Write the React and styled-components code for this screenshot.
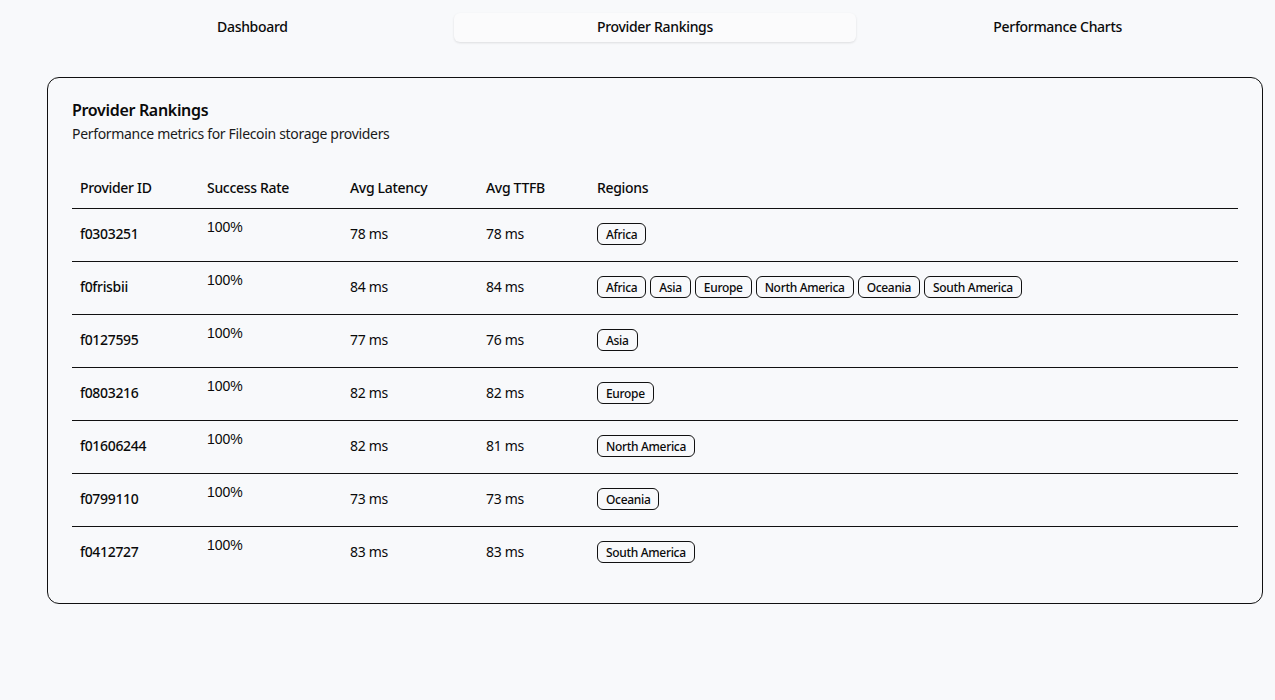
import React from "react";
import styled, { createGlobalStyle } from "styled-components";

const GlobalStyle = createGlobalStyle`
  html, body {
    margin: 0;
    padding: 0;
    background: #f8f9fb;
  }
  body {
    font-family: "Noto Sans", "Open Sans", sans-serif;
    letter-spacing: -0.02em;
    color: #0a0a0a;
  }
`;

const Page = styled.div`
  padding: 9px 12px 40px 47px;
  display: flex;
  flex-direction: column;
  gap: 31px;
  width: 1216px;
`;

const TabList = styled.div`
  display: grid;
  grid-template-columns: repeat(3, 1fr);
  padding: 4px;
  height: 29px;
  border-radius: 8px;
`;

const Tab = styled.button`
  border: none;
  font-family: inherit;
  letter-spacing: inherit;
  font-size: 14px;
  font-weight: 500;
  line-height: 18px;
  padding: 0 0 2px;
  color: #0a0a0a;
  border-radius: 6px;
  background: ${(p) => (p.$active ? "#fbfbfc" : "transparent")};
  box-shadow: ${(p) =>
    p.$active ? "0 1px 3px rgba(0, 0, 0, 0.08), 0 1px 2px rgba(0, 0, 0, 0.04)" : "none"};
  cursor: pointer;
`;

const Card = styled.section`
  border: 1px solid #111;
  border-radius: 12px;
  padding: 23px 24px 23px;
  display: flex;
  flex-direction: column;
`;

const Title = styled.h2`
  margin: 0;
  font-size: 16px;
  font-weight: 600;
  line-height: 18px;
`;

const Subtitle = styled.p`
  margin: 5px 0 0;
  font-size: 14px;
  line-height: 20px;
  color: #1a1a1a;
`;

const Table = styled.table`
  margin-top: 24px;
  width: 100%;
  table-layout: fixed;
  border-collapse: collapse;
  font-size: 14px;
`;

const Th = styled.th`
  text-align: left;
  font-weight: 500;
  height: 38px;
  padding: 0 8px 2px;
  border-bottom: 1px solid #111;
  width: ${(p) => p.$w || "auto"};
`;

const Tr = styled.tr`
  height: 53px;
  & + & td {
    border-top: 1px solid #111;
  }
`;

const Td = styled.td`
  padding: 0 8px 4px;
  vertical-align: middle;
  font-weight: ${(p) => (p.$bold ? 500 : 400)};
`;

const Rate = styled.div`
  font-family: "Liberation Sans", Arial, sans-serif;
  letter-spacing: 0;
  font-size: 14px;
  padding-bottom: 12px;
`;

const Badges = styled.div`
  display: flex;
  flex-wrap: wrap;
  gap: 4px;
  margin-top: 2px;
`;

const Badge = styled.span`
  display: inline-flex;
  align-items: center;
  height: 22px;
  padding: 0 8px;
  border: 1px solid #111;
  border-radius: 6px;
  font-size: 12px;
  font-weight: 500;
  box-sizing: border-box;
`;

const providers = [
  { id: "f0303251", latency: 78, ttfb: 78, regions: ["Africa"] },
  {
    id: "f0frisbii",
    latency: 84,
    ttfb: 84,
    regions: ["Africa", "Asia", "Europe", "North America", "Oceania", "South America"],
  },
  { id: "f0127595", latency: 77, ttfb: 76, regions: ["Asia"] },
  { id: "f0803216", latency: 82, ttfb: 82, regions: ["Europe"] },
  { id: "f01606244", latency: 82, ttfb: 81, regions: ["North America"] },
  { id: "f0799110", latency: 73, ttfb: 73, regions: ["Oceania"] },
  { id: "f0412727", latency: 83, ttfb: 83, regions: ["South America"] },
];

export default function App() {
  return (
    <>
      <GlobalStyle />
      <Page>
        <TabList>
          <Tab>Dashboard</Tab>
          <Tab $active>Provider Rankings</Tab>
          <Tab>Performance Charts</Tab>
        </TabList>
        <Card>
          <Title>Provider Rankings</Title>
          <Subtitle>Performance metrics for Filecoin storage providers</Subtitle>
          <Table>
            <thead>
              <tr>
                <Th $w="111px">Provider ID</Th>
                <Th $w="127px">Success Rate</Th>
                <Th $w="120px">Avg Latency</Th>
                <Th $w="95px">Avg TTFB</Th>
                <Th>Regions</Th>
              </tr>
            </thead>
            <tbody>
              {providers.map((p) => (
                <Tr key={p.id}>
                  <Td $bold>{p.id}</Td>
                  <Td>
                    <Rate>100%</Rate>
                  </Td>
                  <Td>{p.latency} ms</Td>
                  <Td>{p.ttfb} ms</Td>
                  <Td>
                    <Badges>
                      {p.regions.map((r) => (
                        <Badge key={r}>{r}</Badge>
                      ))}
                    </Badges>
                  </Td>
                </Tr>
              ))}
            </tbody>
          </Table>
        </Card>
      </Page>
    </>
  );
}
